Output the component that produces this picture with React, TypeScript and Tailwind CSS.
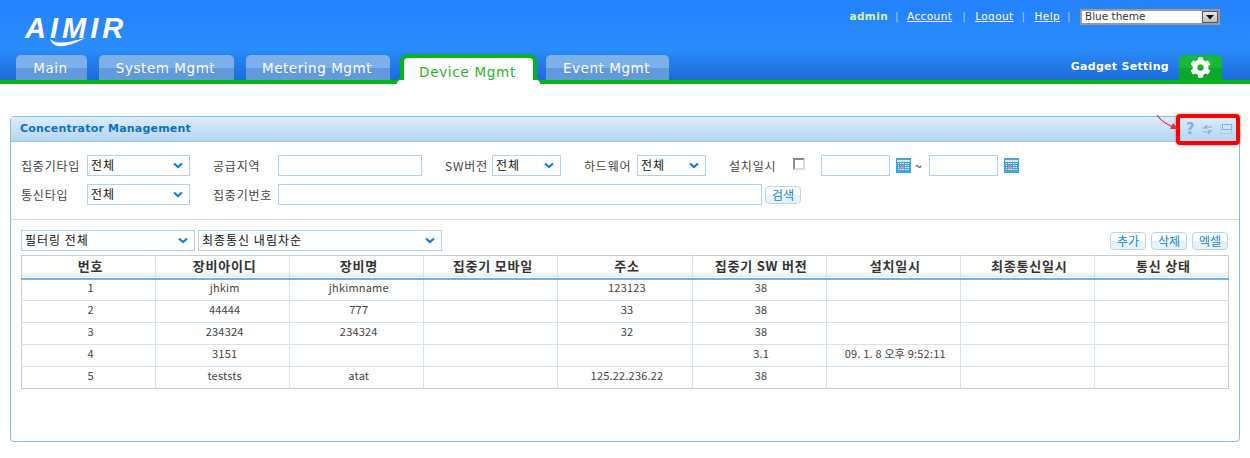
import { FaCog } from 'react-icons/fa';

const KO = "font-['Noto_Sans_CJK_KR','Liberation_Sans',sans-serif]";

const columns = ['번호', '장비아이디', '장비명', '집중기 모바일', '주소', '집중기 SW 버전', '설치일시', '최종통신일시', '통신 상태'];

const rows = [
  ['1', 'jhkim', 'jhkimname', '', '123123', '38', '', '', ''],
  ['2', '44444', '777', '', '33', '38', '', '', ''],
  ['3', '234324', '234324', '', '32', '38', '', '', ''],
  ['4', '3151', '', '', '', '3.1', '09. 1. 8 오후 9:52:11', '', ''],
  ['5', 'teststs', 'atat', '', '125.22.236.22', '38', '', '', ''],
];

function Chevron() {
  return (
    <svg width="10" height="7" viewBox="0 0 10 7" className="shrink-0">
      <path d="M1 1.5 L5 5 L9 1.5" fill="none" stroke="#0f7fd0" strokeWidth="2.2" />
    </svg>
  );
}

function Select({ label, className }: { label: string; className: string }) {
  return (
    <div className={`flex h-[21px] items-center justify-between border border-[#aed2ef] pl-[3px] pr-1.5 text-[12px] leading-none tracking-[1px] text-[#111] ${className}`}>
      <span className="-mt-0.5">{label}</span>
      <Chevron />
    </div>
  );
}

function Label({ text, className }: { text: string; className: string }) {
  return <span className={`text-[12px] leading-none tracking-[0.8px] text-[#444] ${className}`}>{text}</span>;
}

function CalendarIcon() {
  return (
    <svg width="15" height="15" viewBox="0 0 15 15" className="shrink-0">
      <rect width="15" height="15" fill="#3fa6dc" />
      <rect x="1" y="2" width="13" height="2" fill="#d5ecf8" />
      <path d="M2 5.5h11M2 7.5h11M2 9.5h11M2 11.5h11" stroke="#e6f5fc" strokeWidth="1" />
      <path d="M3.5 5v8M6 5v8M8.5 5v8M11 5v8" stroke="#3fa6dc" strokeWidth="1" />
      <rect x="4.5" y="7.5" width="3" height="3" fill="none" stroke="#f08080" strokeWidth="1" />
    </svg>
  );
}

function SmallButton({ text }: { text: string }) {
  return (
    <div className="flex h-[18px] w-[36px] items-center justify-center rounded-sm border border-[#b4d7f0] bg-[linear-gradient(#ffffff_50%,#e6f3fc_50%)] text-[12px] leading-none text-[#1283d4]">
      {text}
    </div>
  );
}

function Tab({ text, className }: { text: string; className: string }) {
  return (
    <div className={`flex h-[25px] items-center justify-center rounded-t-[5px] bg-[linear-gradient(#7bb0ea_50%,#6299dc_50%)] pt-0.5 pr-0.5 text-[13.5px] tracking-[0.55px] text-white ${className}`}>
      {text}
    </div>
  );
}

function ActiveTab({ text }: { text: string }) {
  return (
    <div className="relative z-10 mb-[-4px] ml-2.5 mr-[9px] flex h-[30px] w-[137px] items-center justify-center rounded-t-[8px] border-x-4 border-t-4 border-[#05b41e] bg-white pt-0.5 pr-0.5 text-[13.5px] tracking-[0.7px] text-[#1fb623]">
      {text}
      {/* S-curve where the tab outline meets the green line */}
      <span className="absolute bottom-0 left-[-7px] h-1 w-[7px] rounded-tl-[6px] bg-white" />
      <span className="absolute bottom-0 right-[-7px] h-1 w-[7px] rounded-tr-[6px] bg-white" />
      <span className="absolute bottom-1 left-[-8px] h-1 w-1 bg-[radial-gradient(circle_at_0_0,#1c6bd8_4px,#05b41e_4px)]" />
      <span className="absolute bottom-1 right-[-8px] h-1 w-1 bg-[radial-gradient(circle_at_100%_0,#1c6bd8_4px,#05b41e_4px)]" />
    </div>
  );
}

function PanelIcons() {
  return (
    <div className="flex items-center gap-[7px]">
      <span className="ml-px w-[10px] text-center font-['DejaVu_Sans',sans-serif] text-[15px] leading-none font-bold text-[#78b4e6]">?</span>
      <svg width="11" height="11" viewBox="0 0 11 11">
        <path d="M10 3H3M5 1L3 3L5 5M2 3V5" fill="none" stroke="#78b4e6" strokeWidth="1.2" />
        <path d="M1 8H8M6 6L8 8L6 10M9 6V8" fill="none" stroke="#78b4e6" strokeWidth="1.2" />
      </svg>
      <svg width="12" height="10" viewBox="0 0 12 10">
        <rect x="0.5" y="0.5" width="11" height="9" fill="none" stroke="#8fc0ea" strokeDasharray="1 1" />
        <rect x="2.5" y="0.5" width="9" height="5" fill="#cfe3f6" stroke="#7ab6e8" />
      </svg>
    </div>
  );
}

export default function App() {
  return (
    <div className={`h-[458px] w-[1250px] overflow-hidden bg-white ${KO}`}>
      {/* Header */}
      <header className="border-b-4 border-[#05b41e] bg-[linear-gradient(#2481ff,#2a8cfb_60%,#1c6bd8)]">
        <div className="flex h-[55px] justify-between pl-[25px] pr-[30px]">
          <div className="relative mt-[13px] h-[34px] w-[100px] text-white">
            <span className="font-['Liberation_Sans',sans-serif] text-[29px] leading-[30px] font-bold tracking-[4px] whitespace-nowrap italic">AIMIR</span>
            <svg width="40" height="12" viewBox="0 0 40 12" className="absolute left-[24px] top-[24px]">
              <path d="M1 1 C3 6 12 8 36 1 C16 12 3 12 1 1Z" fill="#ffffff" />
            </svg>
          </div>
          <div className="mt-[9px] flex h-4 items-center font-['DejaVu_Sans',sans-serif] text-[10.5px] tracking-[0.4px] text-white">
            <span className="font-bold text-[#d8f5a0]">admin</span>
            <span className="ml-[7px] text-[#a8d0ff]">|</span>
            <a className="ml-[8px] underline">Account</a>
            <span className="ml-[10px] text-[#a8d0ff]">|</span>
            <a className="ml-[9px] underline">Logout</a>
            <span className="ml-[8px] text-[#a8d0ff]">|</span>
            <a className="ml-[9px] underline">Help</a>
            <span className="ml-[7px] text-[#a8d0ff]">|</span>
            <div className="ml-[9px] flex h-4 w-[140px] items-center justify-between border-2 border-[#9a9a9a] bg-white pl-[3px] tracking-normal text-[#333]">
              Blue theme
              <span className="flex h-3 w-[16px] items-center justify-center border border-[#555] bg-[linear-gradient(#e8e8e8,#bdbdbd)]">
                <svg width="8" height="5" viewBox="0 0 8 5"><path d="M0 0h8L4 4.5z" fill="#111" /></svg>
              </span>
            </div>
          </div>
        </div>
        <nav className="flex h-[25px] items-end pl-4 pr-[28px] font-['DejaVu_Sans',sans-serif]">
          <Tab text="Main" className="w-[71px]" />
          <Tab text="System Mgmt" className="ml-3 w-[135px]" />
          <Tab text="Metering Mgmt" className="ml-3 w-[144px]" />
          <ActiveTab text="Device Mgmt" />
          <Tab text="Event Mgmt" className="w-[123px]" />
          <span className="ml-auto mb-[5px] text-[11px] font-bold tracking-[0.3px] text-white">Gadget Setting</span>
          <div className="ml-[10px] flex h-[25px] w-[43px] items-center justify-center rounded-t-[5px] bg-[linear-gradient(#17b838_50%,#0ca82c_50%)]">
            <FaCog className="text-[21px] text-white" />
          </div>
        </nav>
      </header>

      {/* Panel */}
      <section className="relative mx-2.5 mt-8 h-[326px] rounded-[4px] border border-[#7fc0e8]">
        <div className="flex h-[25px] items-center justify-between border-b border-[#9dc4ec] bg-[linear-gradient(#dcecfc,#b5d5f0)] pl-[9px] pr-[7px]">
          <span className="font-['DejaVu_Sans',sans-serif] text-[11px] font-bold tracking-[0.2px] text-[#0f70c2]">Concentrator Management</span>
          <PanelIcons />
        </div>

        {/* Search form */}
        <div className="h-[78px] border-b border-[#c8e0f4] pl-2.5 pt-[13px]">
          <div className="flex h-[21px] items-center">
            <Label text="집중기타입" className="w-[66px]" />
            <Select label="전체" className="w-[103px]" />
            <Label text="공급지역" className="ml-[23px] w-[65px]" />
            <div className="h-[21px] w-[144px] border border-[#aed2ef]" />
            <Label text="SW버전" className="ml-[23px] w-[47px]" />
            <Select label="전체" className="w-[69px]" />
            <Label text="하드웨어" className="ml-[23px] w-[53px]" />
            <Select label="전체" className="w-[69px]" />
            <Label text="설치일시" className="ml-[23px] w-[64px]" />
            <span className="mb-1 h-3 w-3 border-2 border-[#888] border-b-[#ddd] border-r-[#ddd]" />
            <div className="ml-4 h-[21px] w-[69px] border border-[#aed2ef]" />
            <div className="ml-1.5"><CalendarIcon /></div>
            <span className="ml-1 w-[14px] text-[12px] text-[#111]">~</span>
            <div className="h-[21px] w-[69px] border border-[#aed2ef]" />
            <div className="ml-1.5"><CalendarIcon /></div>
          </div>
          <div className="mt-2 flex h-[21px] items-center">
            <Label text="통신타입" className="w-[66px]" />
            <Select label="전체" className="w-[103px]" />
            <Label text="집중기번호" className="ml-[23px] w-[65px]" />
            <div className="h-[21px] w-[484px] border border-[#aed2ef]" />
            <div className="ml-[3px]"><SmallButton text="검색" /></div>
          </div>
        </div>

        {/* List */}
        <div className="px-2.5 pt-2.5">
          <div className="flex h-[21px] items-center">
            <Select label="필터링 전체" className="w-[174px]" />
            <Select label="최종통신 내림차순" className="ml-[3px] w-[244px]" />
            <div className="ml-auto mr-[1px] flex gap-[5px]">
              <SmallButton text="추가" />
              <SmallButton text="삭제" />
              <SmallButton text="엑셀" />
            </div>
          </div>
          <table className="mt-1 w-[1208px] table-fixed border-collapse border border-[#cccccc] text-center text-[11px] tracking-[0.2px] text-[#444]">
            <thead>
              <tr className="h-[23px] border-b-2 border-[#6db3e8] bg-[linear-gradient(#ffffff_70%,#dfeefa)]">
                {columns.map((c) => (
                  <th key={c} className="border-r border-[#cfe4f5] pb-[3px] pl-1 text-[13px] leading-none font-bold tracking-[0.8px] text-[#333] last:border-r-0">
                    {c}
                  </th>
                ))}
              </tr>
            </thead>
            <tbody>
              {rows.map((row) => (
                <tr key={row[0]} className="h-[22px] border-b border-[#cfe4f5] last:border-b-0">
                  {row.map((cell, i) => (
                    <td key={i} className="border-r border-[#cfe4f5] p-0 pb-[4px] pl-1 leading-none last:border-r-0">
                      {cell}
                    </td>
                  ))}
                </tr>
              ))}
            </tbody>
          </table>
        </div>

        {/* Red annotation over the panel icons */}
        <div className="absolute right-[-1px] top-[-3px] h-[31px] w-[64px] rounded-[4px] border-4 border-[#ff0000] shadow-[0_0_3px_#888]" />
        <svg width="24" height="20" viewBox="0 0 24 20" className="absolute right-[60px] top-[-3px]">
          <path d="M2 1 C6 7 12 11 21 14" fill="none" stroke="#e8303a" strokeWidth="1.2" />
          <path d="M23 15 L15 15 L18 9Z" fill="#e8303a" />
        </svg>
      </section>
    </div>
  );
}
